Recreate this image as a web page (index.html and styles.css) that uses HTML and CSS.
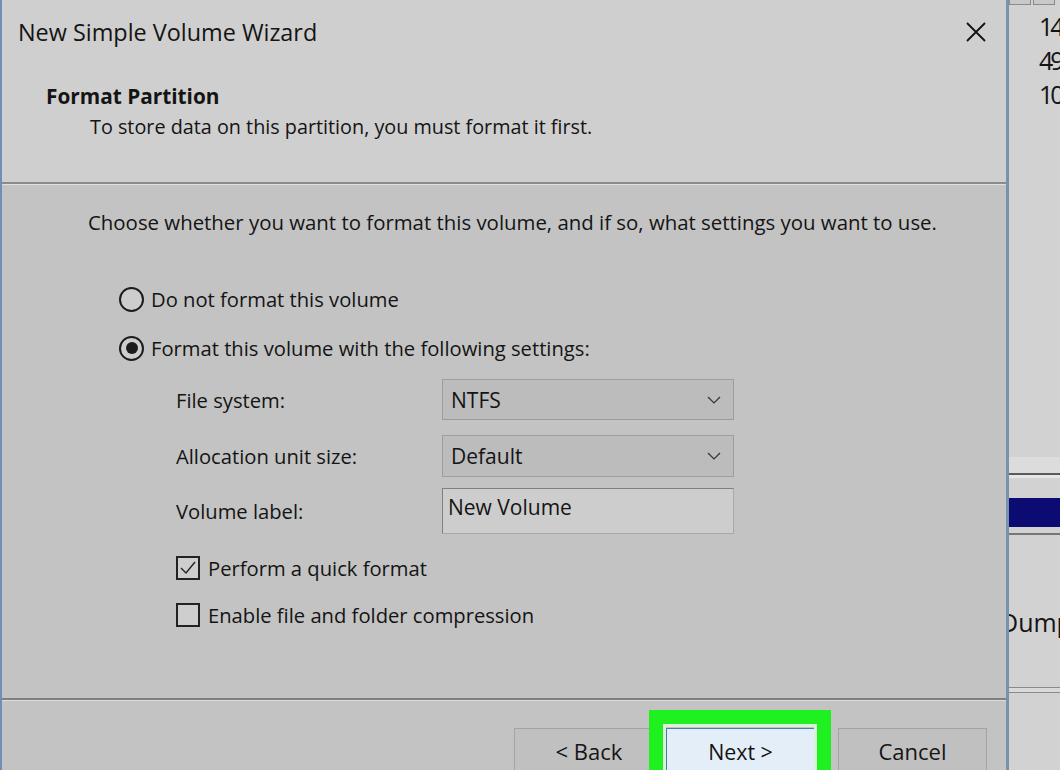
FILE: index.html
```html
<!DOCTYPE html>
<html lang="en">
<head>
  <meta charset="UTF-8" />
  <title>New Simple Volume Wizard</title>
  <link rel="stylesheet" href="styles.css">
</head>
<body>
  <div class="screen">
    <div class="wizard">
      <div class="wizard-head">
        <div class="titlebar">
          <span class="title">New Simple Volume Wizard</span>
          <svg class="close" viewBox="0 0 22 22" width="22" height="22">
            <path d="M2 2 L20 20 M20 2 L2 20" stroke="#111" stroke-width="1.8" fill="none"/>
          </svg>
        </div>
        <div class="page-title">Format Partition</div>
        <div class="page-sub">To store data on this partition, you must format it first.</div>
      </div>

      <div class="wizard-body">
        <p class="intro">Choose whether you want to format this volume, and if so, what settings you want to use.</p>

        <div class="options">
          <label class="radio"><span class="dot"></span>Do not format this volume</label>
          <label class="radio second checked"><span class="dot"></span>Format this volume with the following settings:</label>
        </div>

        <div class="settings">
          <div class="field first">
            <span>File system:</span>
            <div class="combo">NTFS
              <svg viewBox="0 0 14 8" width="14" height="8"><path d="M1 1 L7 7 L13 1" stroke="#333" stroke-width="1.2" fill="none"/></svg>
            </div>
          </div>
          <div class="field second">
            <span>Allocation unit size:</span>
            <div class="combo">Default
              <svg viewBox="0 0 14 8" width="14" height="8"><path d="M1 1 L7 7 L13 1" stroke="#333" stroke-width="1.2" fill="none"/></svg>
            </div>
          </div>
          <div class="field third">
            <span>Volume label:</span>
            <div class="textbox">New Volume</div>
          </div>

          <label class="check checked">
            <span class="box"><svg viewBox="0 0 20 20" width="20" height="20"><path d="M3 10 L8 15 L17 4" stroke="#222" stroke-width="1.4" fill="none"/></svg></span>
            Perform a quick format
          </label>
          <label class="check second">
            <span class="box"></span>
            Enable file and folder compression
          </label>
        </div>
      </div>

      <div class="wizard-foot">
        <button class="btn">&lt; Back</button>
        <button class="btn next">Next &gt;<span class="highlight"></span></button>
        <button class="btn cancel">Cancel</button>
      </div>
    </div>

    <div class="behind">
      <div class="tabs"><span></span><span></span></div>
      <div class="num first">14</div>
      <div class="num">49</div>
      <div class="num">10</div>
      <div class="band"></div>
      <div class="selected"></div>
      <div class="rule"></div>
      <div class="dump">Dump</div>
      <div class="rule double"></div>
    </div>
  </div>
</body>
</html>
```

FILE: styles.css
```css
* {
  box-sizing: border-box;
}
html, body {
  margin: 0;
}
body {
  font-family: 'Open Sans', 'Noto Sans', sans-serif;
  color: #141414;
  width: 1060px;
  height: 770px;
  overflow: hidden;
  background: #d3d3d3;
}
.screen {
  display: flex;
  height: 770px;
}

/* wizard window */
.wizard {
  width: 1009px;
  flex: none;
  display: flex;
  flex-direction: column;
  border-left: 2px solid #6f90b3;
  border-right: 3px solid #7891ac;
  background: #c3c3c3;
}
.wizard-head {
  height: 184px;
  flex: none;
  background: #cfcfcf;
  border-bottom: 2px solid #8b8b8b;
}
.titlebar {
  display: flex;
  justify-content: space-between;
  align-items: flex-start;
  height: 82px;
  padding: 17px 19px 0 16px;
}
.title {
  font-size: 23.4px;
  line-height: 30px;
}
.close {
  margin-top: 4px;
}
.page-title {
  font-weight: bold;
  font-size: 20.8px;
  line-height: 28px;
  padding-left: 44px;
}
.page-sub {
  font-size: 19.8px;
  line-height: 26px;
  padding-left: 88px;
  margin-top: 4px;
}

.wizard-body {
  flex: 1;
  border-top: 1px solid #e0e0e0;
  font-size: 20.2px;
}
.intro {
  font-size: 20.4px;
  margin: 24px 0 0 0;
  padding-left: 86px;
  line-height: 26px;
}

.options {
  padding-left: 117px;
  margin-top: 49px;
}
.radio {
  display: flex;
  align-items: center;
  gap: 7px;
  height: 30px;
}
.radio.second {
  margin-top: 19px;
}
.dot {
  width: 25px;
  height: 25px;
  border: 2px solid #1c1c1c;
  border-radius: 50%;
  background: #cdcdcd;
  display: flex;
  align-items: center;
  justify-content: center;
}
.radio.checked .dot::after {
  content: "";
  width: 12px;
  height: 12px;
  border-radius: 50%;
  background: #1c1c1c;
}

.settings {
  padding-left: 174px;
  margin-top: 16px;
}
.field {
  display: grid;
  grid-template-columns: 266px 292px;
  align-items: center;
}
.field.first { height: 41px; }
.field.second { height: 42px; margin-top: 15px; }
.field.third { height: 46px; margin-top: 11px; }
.combo {
  height: 100%;
  font-size: 21px;
  display: flex;
  align-items: center;
  justify-content: space-between;
  padding: 0 12px 0 8px;
  background: #bcbcbc;
  border: 1px solid #9c9c9c;
}
.textbox {
  height: 100%;
  font-size: 21px;
  padding: 4px 5px;
  line-height: 28px;
  background: #cdcdcd;
  border: 1px solid #808080;
  border-right-color: #a8a8a8;
  border-bottom-color: #a8a8a8;
}

.check {
  display: flex;
  align-items: center;
  gap: 8px;
  height: 24px;
  margin-top: 22px;
}
.check.second {
  margin-top: 23px;
}
.box {
  width: 24px;
  height: 24px;
  border: 2px solid #222;
  background: #cecece;
  display: flex;
  align-items: center;
  justify-content: center;
}

/* buttons */
.wizard-foot {
  height: 72px;
  flex: none;
  border-top: 2px solid #7f7f7f;
  box-shadow: inset 0 1px 0 #dedede;
  display: flex;
  justify-content: flex-end;
  align-items: flex-start;
  padding: 28px 19px 0 0;
}
.btn {
  font-family: inherit;
  font-size: 22px;
  color: #141414;
  width: 150px;
  height: 46px;
  background: #c0c0c0;
  border: 1px solid #a3a3a3;
  padding: 0;
}
.btn.next {
  position: relative;
  width: 149px;
  margin-left: 2px;
  background: #e4eef8;
  border-color: #4a7cae;
  font-size: 21.4px;
}
.btn.cancel {
  width: 149px;
  margin-left: 23px;
}
.highlight {
  position: absolute;
  top: -19px;
  left: -18px;
  right: -17px;
  bottom: -20px;
  border: 14px solid #1ff01f;
  box-shadow: inset 0 0 0 3px #d9f3d9;
}

/* window behind the wizard */
.behind {
  flex: 1;
  overflow: hidden;
  display: flex;
  flex-direction: column;
  background: #d2d2d2;
  font-size: 25px;
}
.tabs {
  display: flex;
  height: 5px;
  gap: 2px;
}
.tabs span {
  width: 22px;
  border: 1px solid #8a8a8a;
  border-top: none;
  background: #c9c9c9;
}
.num {
  padding-left: 30px;
  line-height: 34px;
  letter-spacing: -3px;
}
.num.first {
  margin-top: 4px;
}
.band {
  margin-top: 346px;
  height: 18px;
  background: #dcdcdc;
  border-bottom: 2px solid #5a5a5a;
  box-shadow: 0 3px 0 #e6e6e6;
}
.selected {
  margin-top: 23px;
  height: 29px;
  background: #0b0b72;
}
.rule {
  margin-top: 6px;
  height: 2px;
  background: #777;
}
.dump {
  margin-top: 70px;
  margin-left: -9px;
  line-height: 34px;
}
.rule.double {
  margin-top: 48px;
  height: 6px;
  background: #d9d9d9;
  border-top: 1px solid #8a8a8a;
  border-bottom: 1px solid #8a8a8a;
}
```
